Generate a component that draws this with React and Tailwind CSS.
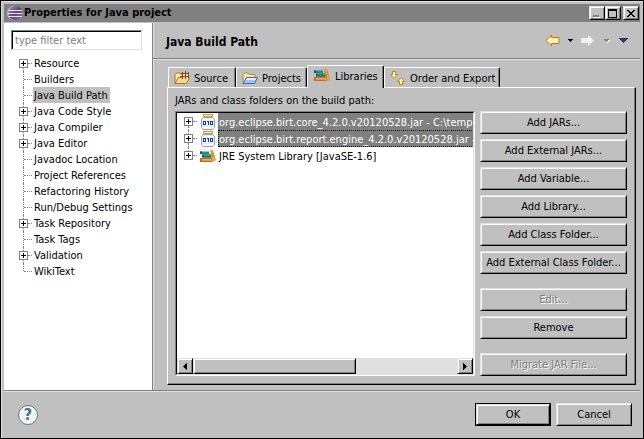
import React from "react";

const RAISED =
  "border border-t-[#e0e0e0] border-l-[#e0e0e0] border-r-black border-b-black shadow-[inset_1px_1px_0_#fff,inset_-1px_-1px_0_#808080]";

const CATEGORIES = [
  { name: "Resource", open: true },
  { name: "Builders" },
  { name: "Java Build Path", selected: true },
  { name: "Java Code Style", open: true },
  { name: "Java Compiler", open: true },
  { name: "Java Editor", open: true },
  { name: "Javadoc Location" },
  { name: "Project References" },
  { name: "Refactoring History" },
  { name: "Run/Debug Settings" },
  { name: "Task Repository", open: true },
  { name: "Task Tags" },
  { name: "Validation", open: true },
  { name: "WikiText" },
];

function Branch({ expandable, first, last }) {
  return (
    <span className="flex w-[14px] shrink-0 self-stretch" aria-hidden="true">
      {expandable ? (
        <span className="flex w-[9px] flex-col">
          <span className={`ml-1 h-1 ${first ? "" : "border-l border-dotted border-[#808080]"}`} />
          <PlusBox />
          <span className={`ml-1 flex-1 ${last ? "" : "border-l border-dotted border-[#808080]"}`} />
        </span>
      ) : (
        <span className={`ml-1 w-px border-l border-dotted border-[#808080] ${last ? "h-2" : "h-full"}`} />
      )}
      <span className="mt-2 mr-px h-px flex-1 border-t border-dotted border-[#808080]" />
    </span>
  );
}

function PlusBox() {
  return (
    <svg className="block size-[9px] shrink-0" viewBox="0 0 9 9" shapeRendering="crispEdges">
      <rect width="9" height="9" fill="#808080" />
      <rect x="1" y="1" width="7" height="7" fill="#fff" />
      <path d="M2 4h5v1H2zM4 2h1v5H4z" fill="#000" />
    </svg>
  );
}

function EclipseIcon() {
  return (
    <svg className="size-4 shrink-0" viewBox="0 0 16 16">
      <defs>
        <linearGradient id="orb" x1="0" y1="0" x2="1" y2="1">
          <stop offset="0" stopColor="#a896c4" />
          <stop offset="0.5" stopColor="#5a4878" />
          <stop offset="1" stopColor="#8a76a8" />
        </linearGradient>
      </defs>
      <circle cx="7.2" cy="8" r="7.2" fill="#c4b6d8" />
      <circle cx="8.4" cy="8" r="7.2" fill="url(#orb)" />
      <path d="M1.500 5.500h13.400M1 8.500h14.400M1.500 11.500h13.400" stroke="#e6def2" />
    </svg>
  );
}

function BooksIcon() {
  return (
    <svg className="size-4 shrink-0" viewBox="0 0 16 16">
      <path d="M10.500 2.500L12.500 2l3 10-1.800 1.500z" fill="#f4b838" stroke="#cc8818" strokeWidth="0.7" />
      <path d="M11.400 5.500l1.800-.5M12.200 8.200l1.800-.5" stroke="#c87010" />
      <path d="M0 3.500h9V6H0z" fill="#2088a0" />
      <path d="M0 3.500h2V6H0z" fill="#145870" />
      <path d="M2 6h9.500v3.500H2z" fill="#30a078" />
      <path d="M2 8.300h9.500v1.200H2z" fill="#125c48" />
      <path d="M2 7h2v1.300H2z" fill="#186850" />
      <path d="M0 10h12.500v4H0z" fill="#d06820" />
      <path d="M2 11.300h10v1.200H2z" fill="#f6c088" />
    </svg>
  );
}

function JarIcon() {
  return (
    <svg className="size-4 shrink-0" viewBox="0 0 16 16">
      <path d="M3.500 3.500h9l2 2v8l-1.500 2H3l-1.500-2v-8z" fill="#e4eefb" stroke="#8ca4cc" />
      <path d="M3 5h10v1H3zM2.500 13h11v1.500h-11z" fill="#fff" />
      <g shapeRendering="crispEdges">
        <path d="M3 0h10v3H3z" fill="#dca020" />
        <path d="M4 1h8v1H4z" fill="#fdeeb8" />
        <path
          d="M3 7h3v4H3zM4 8v2h1V8zM10 7h3v4h-3zM11 8v2h1V8zM7 7h2v4H8V8H7z"
          fill="#24407c"
          fillRule="evenodd"
        />
      </g>
    </svg>
  );
}

function FolderIcon({ source }) {
  const line = source ? "#b07424" : "#b8862c";
  return (
    <svg className="size-4 shrink-0" viewBox="0 0 16 16">
      <path d="M1 13.500V4.500L2.500 3H6l1.500 1.500H13V9" fill="#fbe4a4" stroke={line} />
      <path
        d="M1 13.500L4.500 7.500H15.500L12.500 13.500z"
        fill={source ? "#fbd890" : "#9cc4f4"}
        stroke={source ? line : "#3c6cb8"}
      />
      {source ? (
        <g shapeRendering="crispEdges">
          <path d="M8 3h6v5H8z" fill="#f4d8a0" />
          <path d="M7 3h8v1H7zM6 6h9v1H6zM8 2h1v7H8zM11 1h1v8h-1zM14 2h1v6h-1z" fill="#7c4c28" />
        </g>
      ) : (
        <path d="M5 8.500h9M4.500 9.500h9" stroke="#e4f0ff" />
      )}
    </svg>
  );
}

function OrderIcon() {
  return (
    <svg className="size-4 shrink-0" viewBox="0 0 16 16" fill="#fff0b8" stroke="#c88010">
      <path d="M2.500 1.500h3v3h2.200L4 8.500.300 4.500h2.200z" />
      <path d="M9.500 14.500h3v-3h2.200L11 7.500 7.300 11.500h2.200z" />
    </svg>
  );
}

function Triangle({ className }) {
  return (
    <svg className={`h-[5px] w-[9px] ${className}`} viewBox="0 0 9 5" shapeRendering="crispEdges" fill="currentColor">
      <path d="M0 0h9L5 5H4z" />
    </svg>
  );
}

function SmallTriangle({ className }) {
  return (
    <svg className={`h-[3px] w-[5px] ${className}`} viewBox="0 0 5 3" shapeRendering="crispEdges" fill="currentColor">
      <path d="M0 0h5v1H4v1H3v1H2V2H1V1H0z" />
    </svg>
  );
}

function Push({ children, disabled, className = "h-[23px]" }) {
  return (
    <button
      type="button"
      disabled={disabled}
      className={`whitespace-nowrap pt-px text-center leading-4 disabled:text-[#808080] disabled:[text-shadow:1px_1px_0_#fff] ${RAISED} ${className}`}
    >
      {children}
    </button>
  );
}

function Tab({ icon, children, active, className = "" }) {
  return (
    <button
      type="button"
      role="tab"
      aria-selected={!!active}
      className={`flex items-center whitespace-nowrap rounded-t-[2px] border-t border-l border-r border-t-white border-l-white border-r-black bg-[#c0c0c0] shadow-[inset_-1px_0_0_#808080] ${
        active ? "relative z-10 -mb-px h-[23px] gap-[5px] pb-1 pl-[6px]" : "h-5 gap-1 pl-[5px]"
      } ${className}`}
    >
      {icon}
      <span className="pt-[3px] leading-4">{children}</span>
    </button>
  );
}

function Entry({ icon, children, selected, focused, first, last }) {
  return (
    <li className="flex h-[17px] items-center pl-[7px]">
      <Branch expandable first={first} last={last} />
      <span className="ml-[2px] flex">{icon}</span>
      <button
        type="button"
        className={`ml-[2px] h-[17px] whitespace-nowrap border-y border-l border-dotted pt-[2px] text-left leading-[13px] ${
          selected ? "flex-1 bg-[#808080] text-white" : ""
        } ${focused ? "border-black" : "border-transparent"}`}
      >
        {children}
      </button>
    </li>
  );
}

function TitleButton({ label, children, className = "" }) {
  return (
    <button
      type="button"
      aria-label={label}
      className={`flex h-[14px] w-4 items-center justify-center bg-[#c0c0c0] ${RAISED} ${className}`}
    >
      <svg className="h-[9px] w-[10px] shrink-0" viewBox="0 0 10 9" shapeRendering="crispEdges">
        {children}
      </svg>
    </button>
  );
}

function TitleBar() {
  return (
    <header className="flex h-[18px] shrink-0 items-center bg-[#808080] pr-px pl-[3px]">
      <EclipseIcon />
      <h1 className="ml-px flex-1 text-[11px] font-bold">Properties for Java project</h1>
      <TitleButton label="Minimize">
        <path d="M1 6h6v2H1z" fill="#808080" />
        <path d="M2 8h6v1H2z" fill="#fff" />
      </TitleButton>
      <TitleButton label="Maximize">
        <path d="M0 0h9v9H0zM1 2v6h7V2z" fill="#000" fillRule="evenodd" />
      </TitleButton>
      <TitleButton label="Close" className="ml-[2px]">
        <path
          d="M1 1h2v1h1v1h2V2h1V1h2v1H8v1H7v1H6v1h1v1h1v1h1v1H7V7H6V6H4v1H3v1H1V7h1V6h1V5h1V4H3V3H2V2H1z"
          fill="#000"
        />
      </TitleButton>
    </header>
  );
}

function Sidebar() {
  return (
    <nav className="flex w-[148px] shrink-0 flex-col bg-white pt-[7px] pl-[7px]" aria-label="Property pages">
      <input
        type="text"
        aria-label="Filter"
        placeholder="type filter text"
        className="h-5 w-[131px] border border-t-[#808080] border-l-[#808080] border-r-[#e0e0e0] border-b-[#e0e0e0] bg-white px-[3px] shadow-[inset_1px_1px_0_#000] outline-none placeholder:text-[#808080] placeholder:opacity-100"
      />
      <ul className="mt-[5px] pl-2">
        {CATEGORIES.map((c, i) => (
          <li key={c.name} className="flex h-4 items-center">
            <Branch expandable={c.open} first={i === 0} last={i === CATEGORIES.length - 1} />
            <button
              type="button"
              className={`h-4 whitespace-nowrap pt-[2px] pr-[2px] pl-px leading-[14px] ${c.selected ? "bg-[#c0c0c0]" : ""}`}
            >
              {c.name}
            </button>
          </li>
        ))}
      </ul>
    </nav>
  );
}

function PageHeader() {
  return (
    <div className="flex h-9 shrink-0 items-center border-b border-[#808080] pr-3 pl-[13px] shadow-[0_1px_0_#e0e0e0]">
      <h2 className="flex-1 pt-[2px] text-[12px] font-bold">Java Build Path</h2>
      <button type="button" aria-label="Back">
        <svg className="h-[13px] w-[15px]" viewBox="0 0 15 13" fill="#fff0b8" stroke="#c07808">
          <path d="M6.500 1L1 6.500 6.500 12V9.500h7.500v-6H6.500z" />
        </svg>
      </button>
      <button type="button" aria-label="Back history" className="ml-2">
        <SmallTriangle className="text-black" />
      </button>
      <button type="button" aria-label="Forward" disabled className="ml-2">
        <svg className="h-[11px] w-[13px]" viewBox="0 0 13 11" fill="#f0f0f0">
          <path d="M0 3h7V0l6 5.500L7 11V8H0z" />
        </svg>
      </button>
      <button type="button" aria-label="Forward history" disabled className="ml-[10px]">
        <SmallTriangle className="text-[#808080] drop-shadow-[1px_1px_0_#fff]" />
      </button>
      <button type="button" aria-label="Menu" className="ml-[10px]">
        <Triangle className="text-[#35356c]" />
      </button>
    </div>
  );
}

function ScrollBar() {
  return (
    <div className="flex h-4 shrink-0 bg-[#e0e0e0]">
      <button type="button" aria-label="Scroll left" className={`flex w-4 items-center justify-center bg-[#c0c0c0] ${RAISED}`}>
        <svg className="h-[7px] w-1" viewBox="0 0 4 7" shapeRendering="crispEdges">
          <path d="M4 0v7H3V6H2V5H1V4H0V3h1V2h1V1h1V0z" />
        </svg>
      </button>
      <div className={`w-[55%] bg-[#c0c0c0] ${RAISED}`} />
      <button
        type="button"
        aria-label="Scroll right"
        className={`ml-auto flex w-4 items-center justify-center bg-[#c0c0c0] ${RAISED}`}
      >
        <svg className="h-[7px] w-1" viewBox="0 0 4 7" shapeRendering="crispEdges">
          <path d="M0 0v7h1V6h1V5h1V4h1V3H3V2H2V1H1V0z" />
        </svg>
      </button>
    </div>
  );
}

function Libraries() {
  return (
    <section className="flex min-h-0 flex-1 flex-col border border-t-white border-l-white border-r-black border-b-black pt-[5px] pr-2 pb-2 pl-[7px] shadow-[inset_-1px_-1px_0_#808080]">
      <p className="h-[18px] leading-4">JARs and class folders on the build path:</p>
      <div className="flex min-h-0 flex-1 gap-[5px]">
        <div className="flex min-w-0 flex-1 flex-col border border-t-[#808080] border-l-[#808080] border-r-white border-b-white">
          <div className="flex min-h-0 flex-1 flex-col border border-t-black border-l-black border-r-[#e0e0e0] border-b-[#e0e0e0] bg-white">
            <ul className="min-h-0 flex-1 overflow-hidden">
              <Entry icon={<JarIcon />} selected first>
                org.eclipse.birt.core_4.2.0.v20120528.jar - C:\temp
              </Entry>
              <Entry icon={<JarIcon />} selected focused>
                org.eclipse.birt.report.engine_4.2.0.v20120528.jar -
              </Entry>
              <Entry icon={<BooksIcon />} last>
                JRE System Library [JavaSE-1.6]
              </Entry>
            </ul>
            <ScrollBar />
          </div>
        </div>
        <div className="flex w-[147px] shrink-0 flex-col gap-[5px]">
          <Push>Add JARs...</Push>
          <Push>Add External JARs...</Push>
          <Push>Add Variable...</Push>
          <Push>Add Library...</Push>
          <Push>Add Class Folder...</Push>
          <Push>Add External Class Folder...</Push>
          <Push disabled className="mt-[9px] h-[23px]">Edit...</Push>
          <Push>Remove</Push>
          <Push disabled className="mt-[9px] h-[23px]">Migrate JAR File...</Push>
        </div>
      </div>
    </section>
  );
}

function Footer() {
  return (
    <footer className="flex h-12 shrink-0 items-center gap-[5px] border-t border-[#808080] pr-2 pl-[14px] shadow-[inset_0_1px_0_#e0e0e0]">
      <button
        type="button"
        aria-label="Help"
        className="mr-auto flex size-5 items-center justify-center rounded-full border border-[#607890] bg-[#f2f4f6] text-[16px] leading-5 font-bold text-[#506c88]"
      >
        ?
      </button>
      <div className="flex w-[76px] border border-black">
        <Push className="h-[21px] flex-1">OK</Push>
      </div>
      <Push className="h-[23px] w-[76px]">Cancel</Push>
    </footer>
  );
}

export default function App() {
  return (
    <div className="h-screen w-full border border-black bg-[#c0c0c0] font-['DejaVu_Sans_Condensed','DejaVu_Sans',sans-serif] text-[11px] text-black">
      <div className="flex h-full flex-col border-t border-l border-[#e0e0e0] pt-[2px] pr-[3px] pl-[2px]">
        <TitleBar />
        <div className="mt-px flex min-h-0 flex-1">
          <Sidebar />
          <main className="flex min-w-0 flex-1 flex-col border-l border-[#808080] shadow-[inset_1px_0_0_#e0e0e0]">
            <PageHeader />
            <div className="flex min-h-0 flex-1 flex-col pt-[6px] pr-1 pb-[5px] pl-[14px]">
              <div role="tablist" className="flex h-[22px] shrink-0 items-end pl-px">
                <Tab icon={<FolderIcon source />} className="w-[68px]">Source</Tab>
                <Tab icon={<FolderIcon />} className="w-[71px]">Projects</Tab>
                <Tab icon={<BooksIcon />} active className="w-[77px]">Libraries</Tab>
                <Tab icon={<OrderIcon />} className="w-[116px]">Order and Export</Tab>
              </div>
              <Libraries />
            </div>
          </main>
        </div>
        <Footer />
      </div>
    </div>
  );
}
